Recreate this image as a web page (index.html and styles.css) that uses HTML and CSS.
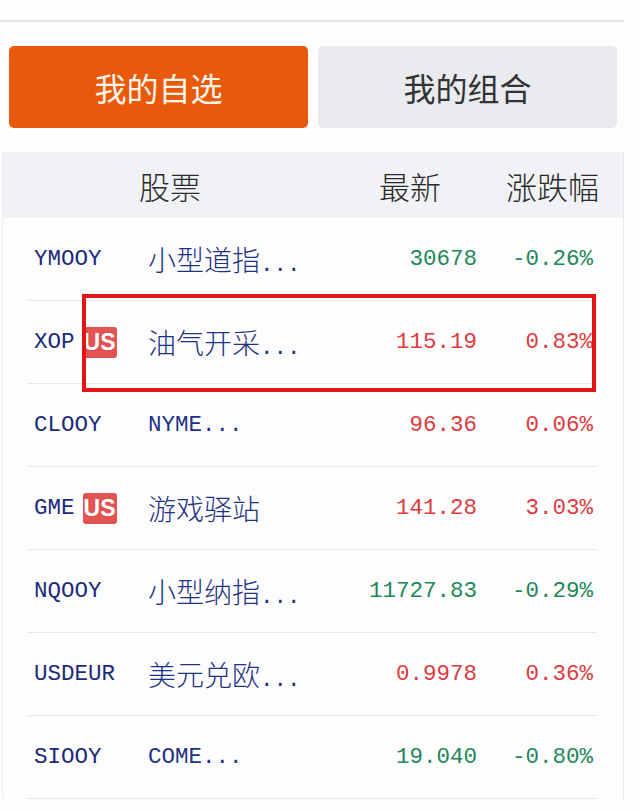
FILE: index.html
```html
<!DOCTYPE html>
<html lang="zh-CN">
<head>
    <meta charset="UTF-8">
    <meta name="viewport" content="width=device-width, initial-scale=1.0">
    <title>我的自选</title>
    <link rel="stylesheet" href="styles.css">
</head>
<body>

<div class="topbar"></div>

<div class="tabs">
    <button class="tab active">我的自选</button>
    <button class="tab">我的组合</button>
</div>

<div class="quotes">
    <div class="quotes-head">
        <span>股票</span>
        <span>最新</span>
        <span>涨跌幅</span>
    </div>

    <div class="row">
        <div class="code">YMOOY</div>
        <div class="name"><span class="cn">小型道指</span>...</div>
        <div class="price down">30678</div>
        <div class="pct down">-0.26%</div>
    </div>
    <div class="row">
        <div class="code">XOP<span class="badge">US</span></div>
        <div class="name"><span class="cn">油气开采</span>...</div>
        <div class="price up">115.19</div>
        <div class="pct up">0.83%</div>
    </div>
    <div class="row">
        <div class="code">CLOOY</div>
        <div class="name">NYME...</div>
        <div class="price up">96.36</div>
        <div class="pct up">0.06%</div>
    </div>
    <div class="row">
        <div class="code">GME<span class="badge">US</span></div>
        <div class="name"><span class="cn">游戏驿站</span></div>
        <div class="price up">141.28</div>
        <div class="pct up">3.03%</div>
    </div>
    <div class="row">
        <div class="code">NQOOY</div>
        <div class="name"><span class="cn">小型纳指</span>...</div>
        <div class="price down">11727.83</div>
        <div class="pct down">-0.29%</div>
    </div>
    <div class="row">
        <div class="code">USDEUR</div>
        <div class="name"><span class="cn">美元兑欧</span>...</div>
        <div class="price up">0.9978</div>
        <div class="pct up">0.36%</div>
    </div>
    <div class="row">
        <div class="code">SIOOY</div>
        <div class="name">COME...</div>
        <div class="price down">19.040</div>
        <div class="pct down">-0.80%</div>
    </div>

    <!-- red box drawn over the XOP row -->
    <div class="mark"></div>
</div>

</body>
</html>
```

FILE: styles.css
```css
body {
    margin: 0;
    background-color: #fdfdfe;
    font-family: "Liberation Mono", "Noto Sans CJK SC", monospace;
    height: 811px;
    overflow: hidden;
}

.topbar {
    width: 624px;
    height: 20px;
    border-bottom: 2px solid #e2e6eb;
}

.tabs {
    display: flex;
    gap: 10px;
    padding: 24px 0 0 9px;
}

.tab {
    width: 299px;
    height: 82px;
    border: none;
    border-radius: 5px;
    font-family: "Noto Sans CJK SC", sans-serif;
    font-size: 32px;
    background-color: #e9ebee;
    color: #333;
    padding: 0;
}

.tab.active {
    background-color: #e8590c;
    color: #fff4e8;
}

.quotes {
    position: relative;
    margin: 24px 0 0 2px;
    width: 620px;
    border-left: 1px solid #eceef1;
    border-right: 1px solid #e6e9ed;
}

.quotes-head {
    display: grid;
    grid-template-columns: 1fr auto 158px;
    align-items: center;
    height: 66px;
    padding: 0 24px 0 136px;
    background-color: #f0f2f5;
    font-family: "Noto Sans CJK SC", sans-serif;
    font-weight: 300;
    font-size: 31px;
    color: #2b2b2b;
}

.quotes-head span:last-child {
    text-align: right;
}

.row {
    display: grid;
    grid-template-columns: 120px 1fr 140px 116px;
    align-items: center;
    height: 82px;
    margin: 0 26px 0 25px;
    padding-right: 4px;
    border-bottom: 1px solid #e6e8ec;
    font-size: 22.5px;
}

.code {
    display: flex;
    align-items: center;
    padding-left: 6px;
    color: #1b2a78;
}

.badge {
    margin-left: 8px;
    width: 34px;
    height: 31px;
    line-height: 31px;
    border-radius: 3px;
    background-color: #e25353;
    color: #fff;
    text-align: center;
    font-family: "Liberation Sans Narrow", "Liberation Sans", sans-serif;
    font-weight: bold;
    font-size: 23px;
}

.name {
    color: #1f3384;
}

.name .cn {
    font-family: "Noto Sans CJK SC", sans-serif;
    font-weight: 300;
    font-size: 28px;
}

.price, .pct {
    text-align: right;
}

.up {
    color: #de3a40;
}

.down {
    color: #20875a;
}

.mark {
    position: absolute;
    left: 79px;
    top: 142px;
    width: 506px;
    height: 90px;
    border: 4px solid #e21515;
}
```
